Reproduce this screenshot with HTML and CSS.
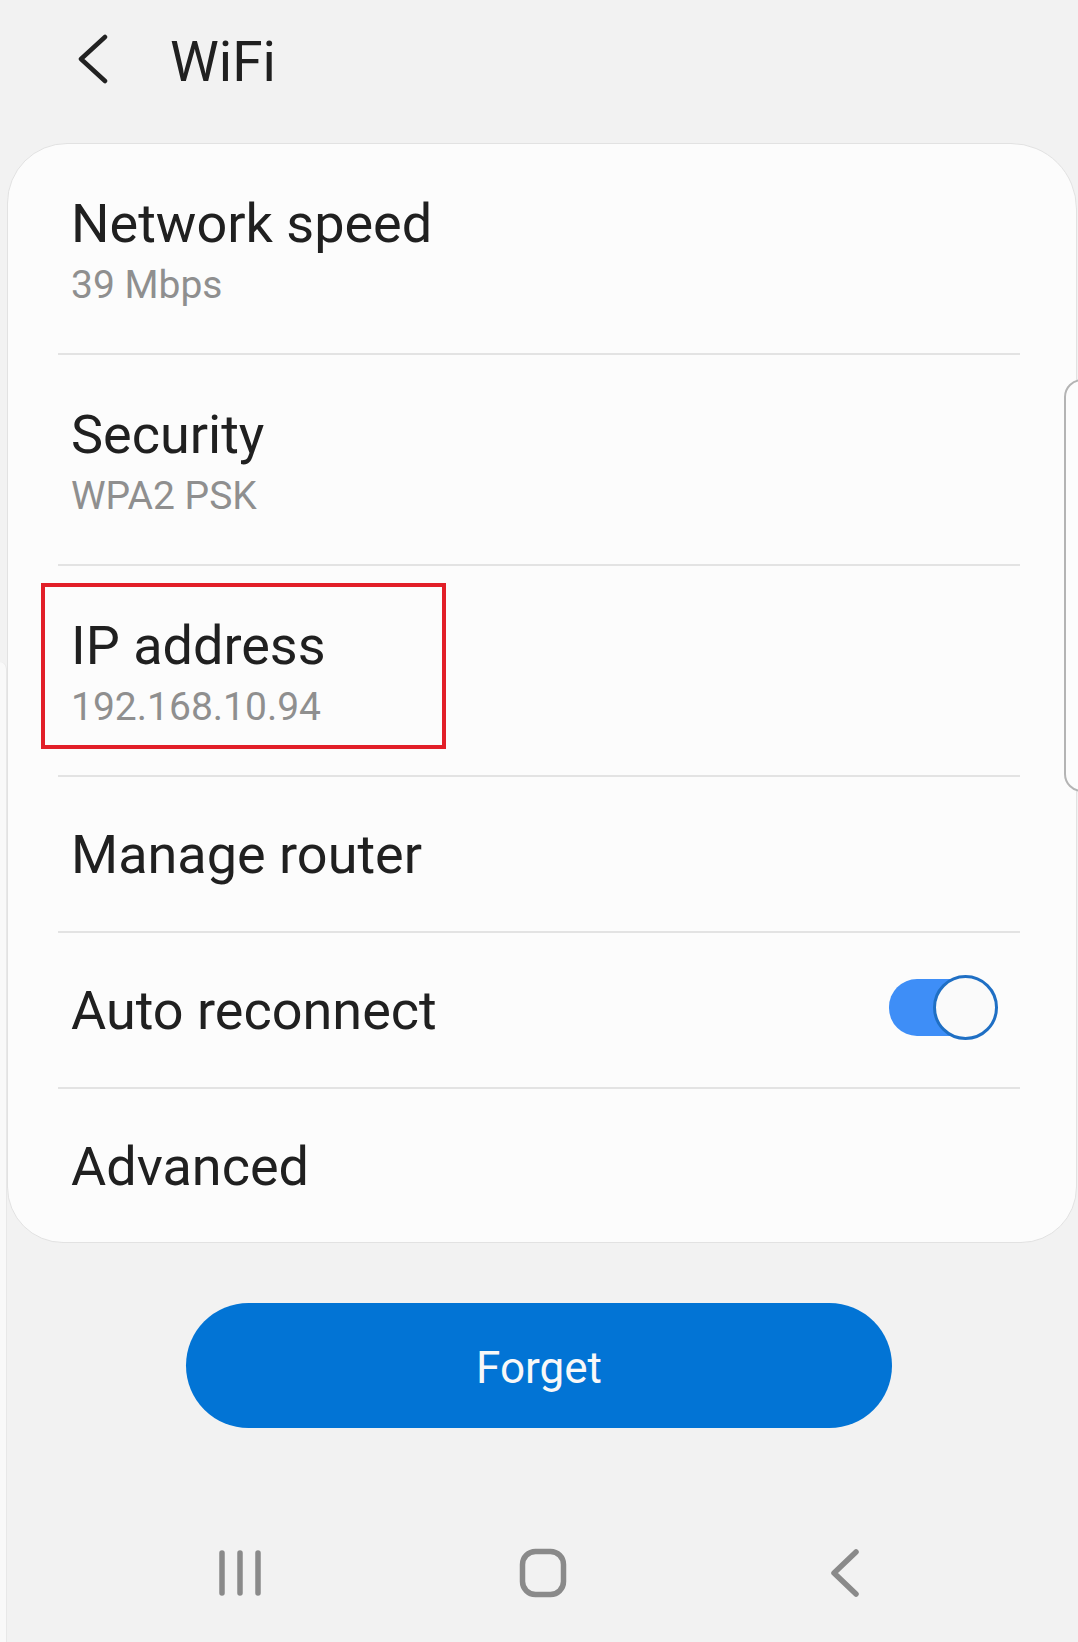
FILE: index.html
```html
<!DOCTYPE html>
<html lang="en">

<head>
    <meta charset="UTF-8">
    <meta name="viewport" content="width=device-width, initial-scale=1.0">
    <link rel="stylesheet" href="styles.css">
</head>

<body>

    <div class="top-bar">
        <svg class="back-icon" width="32" height="50" viewBox="0 0 32 50">
            <path d="M28 3 L4 25 L28 47" fill="none" stroke="#222" stroke-width="4.5" stroke-linecap="round" stroke-linejoin="round"/>
        </svg>
        <div class="page-title">WiFi</div>
    </div>

    <div class="info-card">
        <div class="info-row">
            <div class="row-title">Network speed</div>
            <div class="row-value">39 Mbps</div>
        </div>
        <div class="divider"></div>
        <div class="info-row">
            <div class="row-title">Security</div>
            <div class="row-value">WPA2 PSK</div>
        </div>
        <div class="divider"></div>
        <div class="info-row marked">
            <div class="row-title">IP address</div>
            <div class="row-value">192.168.10.94</div>
            <div class="mark-box"></div>
        </div>
        <div class="divider"></div>
        <div class="info-row single">
            <div class="row-title">Manage router</div>
        </div>
        <div class="divider"></div>
        <div class="info-row single switch-row">
            <div class="row-title">Auto reconnect</div>
            <div class="toggle">
                <div class="toggle-track"></div>
                <div class="toggle-thumb"></div>
            </div>
        </div>
        <div class="divider"></div>
        <div class="info-row single last">
            <div class="row-title">Advanced</div>
        </div>
    </div>

    <div class="scroll-tab"></div>
    <div class="left-edge"></div>

    <button class="forget-button">Forget</button>

    <div class="nav-bar">
        <svg width="46" height="48" viewBox="0 0 46 48">
            <path d="M4 4 V44 M22 4 V44 M40 4 V44" stroke="#8a8a8a" stroke-width="5.5" stroke-linecap="round"/>
        </svg>
        <svg width="48" height="50" viewBox="0 0 48 50">
            <rect x="3.5" y="3.5" width="41" height="43" rx="13" fill="none" stroke="#8a8a8a" stroke-width="5.5"/>
        </svg>
        <svg width="32" height="50" viewBox="0 0 32 50">
            <path d="M27 4 L5 25 L27 46" fill="none" stroke="#8a8a8a" stroke-width="5.5" stroke-linecap="round" stroke-linejoin="round"/>
        </svg>
    </div>

</body>

</html>
```

FILE: styles.css
```css
body {
    margin: 0;
    padding: 0;
    width: 1078px;
    height: 1642px;
    background-color: #f2f2f2;
    font-family: Roboto, "Liberation Sans", sans-serif;
    overflow: hidden;
    position: relative;
}

.top-bar {
    display: flex;
    align-items: flex-start;
    padding: 30px 0 0 77px;
    height: 64px;
}

.back-icon {
    margin-top: 4px;
    margin-right: 61px;
}

.page-title {
    font-size: 55px;
    line-height: 64px;
    color: #202020;
}

.info-card {
    margin: 49px 0 0 7px;
    width: 1070px;
    box-sizing: border-box;
    background-color: #fcfcfc;
    border: 1px solid #e2e2e2;
    border-radius: 60px 66px 56px 56px;
}

.info-row {
    position: relative;
    padding: 48px 56px 45px 63px;
}

.info-row.single {
    padding-top: 46px;
    padding-bottom: 44px;
}

.info-row.last {
    padding-bottom: 43px;
}

.row-title {
    font-size: 54px;
    line-height: 64px;
    color: #202020;
}

.row-value {
    margin-top: 6px;
    font-size: 39px;
    line-height: 46px;
    color: #8f8f8f;
}

.divider {
    height: 2px;
    margin: 0 56px 0 50px;
    background-color: #e3e3e3;
}

.mark-box {
    position: absolute;
    left: 33px;
    top: 17px;
    width: 405px;
    height: 166px;
    box-sizing: border-box;
    border: 4px solid #e21f28;
}

.switch-row {
    display: flex;
    align-items: center;
    justify-content: space-between;
    padding-right: 78px;
}

.toggle {
    position: relative;
    width: 109px;
    height: 65px;
    margin: -8px 0 0 0;
}

.toggle-track {
    position: absolute;
    left: 0;
    top: 4px;
    width: 100px;
    height: 57px;
    border-radius: 28px;
    background-color: #3e8ef7;
}

.toggle-thumb {
    position: absolute;
    right: 0;
    top: 0;
    width: 65px;
    height: 65px;
    box-sizing: border-box;
    border-radius: 50%;
    border: 3.5px solid #1f6fc4;
    background-color: #fafafa;
}

.scroll-tab {
    position: absolute;
    left: 1064px;
    top: 379px;
    width: 40px;
    height: 413px;
    box-sizing: border-box;
    border: 2px solid #b4b4b4;
    border-radius: 18px;
    background-color: #fcfcfc;
}

.left-edge {
    position: absolute;
    left: 0;
    top: 662px;
    width: 6px;
    height: 980px;
    background-color: #f9f9f9;
    border-right: 1px solid #e8e8e8;
    border-top-right-radius: 14px;
}

.forget-button {
    display: flex;
    align-items: center;
    justify-content: center;
    margin: 60px auto 0 auto;
    width: 706px;
    height: 125px;
    box-sizing: border-box;
    padding-top: 6px;
    border: none;
    border-radius: 63px;
    background-color: #0274d5;
    color: #f8f8f8;
    font-family: Roboto, "Liberation Sans", sans-serif;
    font-size: 44px;
}

.nav-bar {
    display: grid;
    grid-template-columns: repeat(3, 302px);
    justify-content: center;
    justify-items: center;
    align-items: center;
    margin-top: 120px;
    padding-left: 8px;
    height: 50px;
}
```
